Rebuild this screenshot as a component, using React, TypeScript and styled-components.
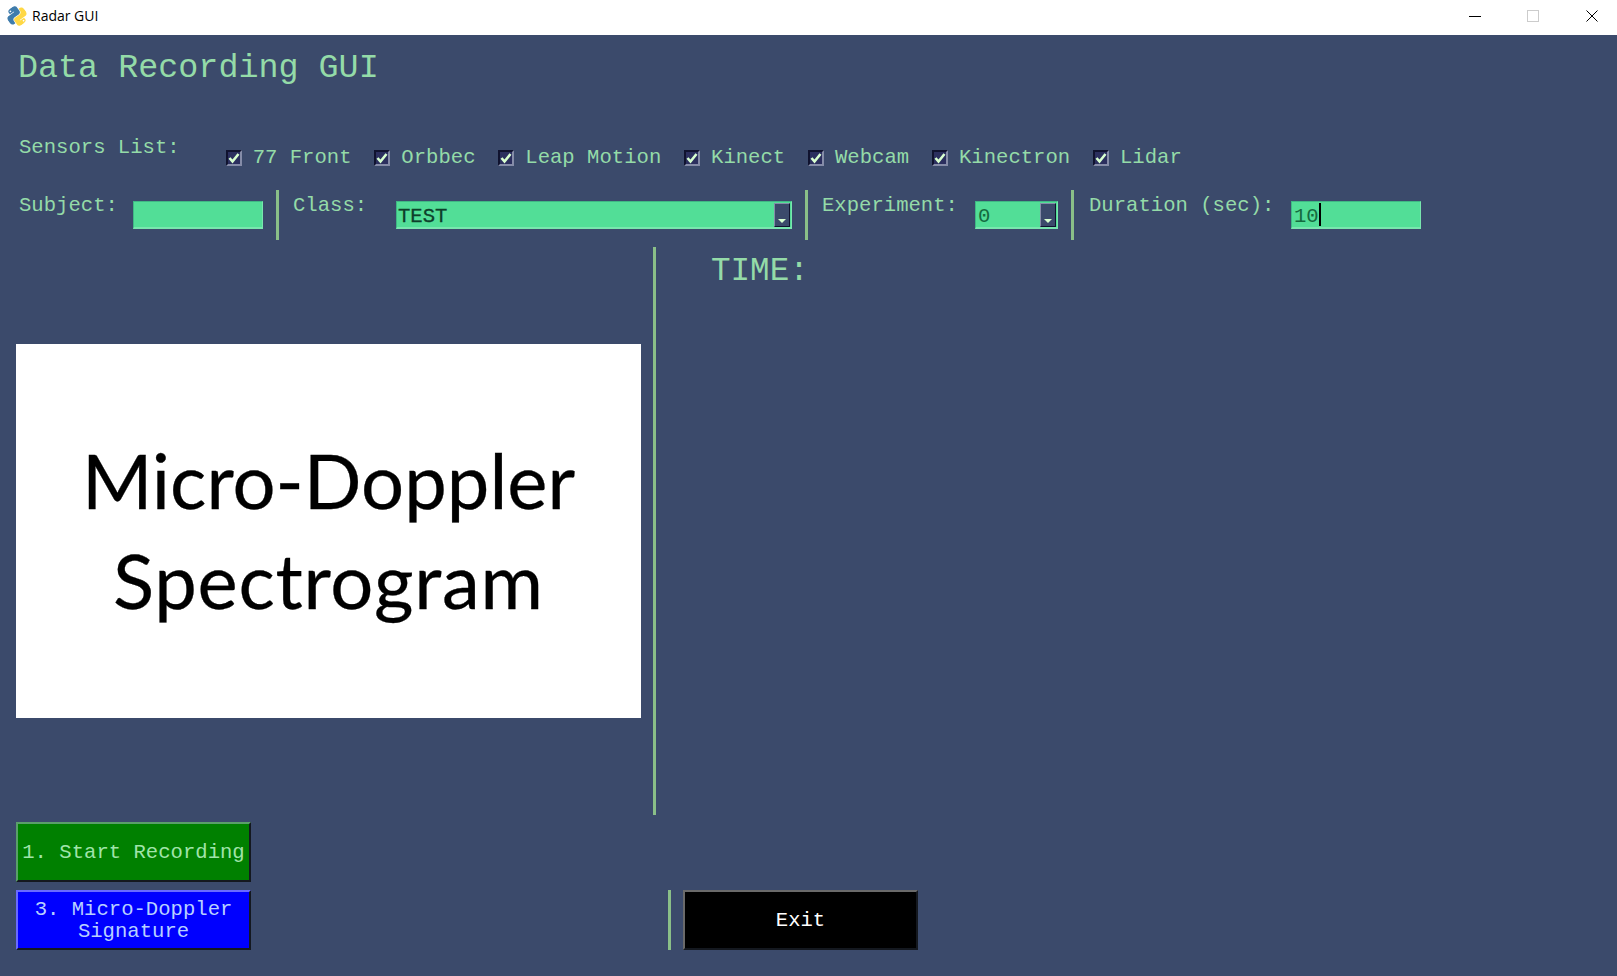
import React from "react";
import styled, { createGlobalStyle } from "styled-components";

const BG = "#3b4a6b";
const INK = "#94dba8";
const FIELD = "#52de97";
const RULE = "#8abf88";
const MONO = '"Liberation Mono", "Courier New", monospace';

const Global = createGlobalStyle`
  html, body { margin: 0; padding: 0; background: ${BG}; overflow: hidden; }
  * { box-sizing: border-box; }
`;

const Window = styled.div`
  width: 1617px;
  height: 976px;
  display: flex;
  flex-direction: column;
  background: ${BG};
  color: ${INK};
  font-family: ${MONO};
  overflow: hidden;
`;

const TitleBar = styled.header`
  height: 35px;
  flex: none;
  background: #fff;
  display: flex;
  align-items: center;
  padding: 0 19px 4px 7px;
`;

const TitleText = styled.span`
  font-family: "Open Sans", "Noto Sans", sans-serif;
  font-size: 14px;
  color: #000;
  margin-left: 5px;
  flex: 1;
`;

const WindowControls = styled.div`
  display: flex;
  gap: 46px;
  align-items: center;
`;

const CloseIcon = styled.svg`
  margin-left: 1px;
`;

const LogoIcon = styled.svg`
  transform: rotate(-35deg);
`;

const Heading = styled.h1`
  margin: 0;
  padding: 14px 0 0 18px;
  height: 102px;
  font-size: 33.4px;
  line-height: 38px;
  font-weight: 400;
`;

const SensorRow = styled.div`
  display: flex;
  height: 53px;
  padding-left: 19px;
`;

const Text = styled.span<{ $w?: number; $top?: number }>`
  flex: none;
  font-size: 20.6px;
  line-height: 24px;
  white-space: pre;
  width: ${(p) => (p.$w ? `${p.$w}px` : "auto")};
  margin-top: ${(p) => p.$top ?? 0}px;
`;

const SensorHeading = styled(Text)`
  margin-top: -1px;
`;

const SensorList = styled.div`
  display: flex;
  gap: 22.8px;
  margin-left: 46px;
  margin-top: 8px;
`;

const Sensor = styled.label`
  display: flex;
  align-items: center;
  gap: 11px;
  height: 24px;
  font-size: 20.6px;
  white-space: pre;
`;

const Box = styled.span`
  width: 16px;
  height: 16px;
  flex: none;
  margin-top: 1px;
  display: flex;
  align-items: center;
  justify-content: center;
  background: #2b2f5e;
  border-style: solid;
  border-width: 2px;
  border-color: #10132f #858ca8 #858ca8 #10132f;
`;

const FormRow = styled.div`
  display: flex;
  height: 50px;
  padding-left: 19px;
`;

const FormRule = styled.div<{ $l: number; $r: number }>`
  width: 3px;
  height: 50px;
  flex: none;
  background: ${RULE};
  margin: 0 ${(p) => p.$r}px 0 ${(p) => p.$l}px;
`;

const Field = styled.div<{ $w: number }>`
  width: ${(p) => p.$w}px;
  height: 28px;
  flex: none;
  margin-top: 11px;
  position: relative;
  display: flex;
  align-items: center;
  padding: 3px 0 0 2px;
  background: ${FIELD};
  border-style: solid;
  border-width: 1px 1px 2px 1px;
  border-color: #3fb884 #78e6ae #78e6ae #3fb884;
  color: #146b3f;
  font-size: 20.6px;
  white-space: pre;
`;

const StrongValue = styled.span`
  color: #0d3f2a;
  margin-left: -1px;
  -webkit-text-stroke: 0.3px #0d3f2a;
`;

const Caret = styled.span`
  width: 2px;
  height: 23px;
  margin-top: -3px;
  background: #000;
`;

const ComboButton = styled.span`
  position: absolute;
  right: 1px;
  top: 1px;
  bottom: 0;
  width: 16px;
  display: flex;
  align-items: flex-end;
  justify-content: center;
  padding-bottom: 3px;
  background: ${BG};
  border-style: solid;
  border-width: 1px;
  border-color: #858ca8 #10132f #10132f #858ca8;
`;

const Arrow = styled.span`
  width: 0;
  height: 0;
  border-left: 4px solid transparent;
  border-right: 4px solid transparent;
  border-top: 4px solid #d8ffd0;
`;

const Main = styled.main`
  display: flex;
  height: 568px;
  margin-top: 7px;
  flex: none;
`;

const LeftPane = styled.section`
  width: 653px;
  flex: none;
  padding: 97px 0 0 16px;
`;

const Plot = styled.div`
  width: 625px;
  height: 374px;
  background: #fff;
  color: #000;
  font-family: Lato, "Open Sans", sans-serif;
  font-size: 76px;
  line-height: 100px;
  text-align: center;
  padding-top: 86px;
  -webkit-text-stroke: 0.3px #000;
`;

const PlotLine = styled.span<{ $track?: number }>`
  display: block;
  letter-spacing: ${(p) => p.$track ?? 0}px;
`;

const MainRule = styled.div`
  width: 3px;
  flex: none;
  background: ${RULE};
`;

const Time = styled.h2`
  margin: 0 0 0 55px;
  padding-top: 6px;
  font-size: 32.6px;
  line-height: 38px;
  font-weight: 400;
`;

const Bottom = styled.footer`
  display: flex;
  margin-top: 7px;
  flex: none;
`;

const ButtonStack = styled.div`
  width: 668px;
  flex: none;
  padding-left: 16px;
  display: flex;
  flex-direction: column;
  gap: 8px;
`;

const ExitGroup = styled.div`
  display: flex;
  align-self: flex-end;
  gap: 12px;
`;

const ExitRule = styled.div`
  width: 3px;
  background: ${RULE};
`;

const Action = styled.button<{ $bg: string; $hi: string; $fg: string }>`
  width: 235px;
  height: 60px;
  padding: 2px 0 0;
  font-family: ${MONO};
  font-size: 20.6px;
  line-height: 22px;
  white-space: pre-line;
  color: ${(p) => p.$fg};
  background: ${(p) => p.$bg};
  border-style: solid;
  border-width: 2px;
  border-color: ${(p) => p.$hi} #14181f #14181f ${(p) => p.$hi};
`;

const Check = () => (
  <svg width="12" height="12" viewBox="0 0 12 12">
    <path d="M1.5 6 L4.5 9.5 L10.5 2" fill="none" stroke="#d8ffd0" strokeWidth="2.6" />
  </svg>
);

const PythonLogo = () => (
  <LogoIcon width="20" height="20" viewBox="0 0 110 110">
    <path
      fill="#3f7cac"
      d="M54.9 0C26.9 0 28.6 12.2 28.6 12.2l.03 12.6h26.7v3.8H18S0 26.5 0 54.8s15.7 27.3 15.7 27.3h9.4V69s-.5-15.7 15.5-15.7h26.6s15 .2 15-14.5V14.5S84 0 54.9 0zM40 8.5a4.8 4.8 0 1 1 0 9.6 4.8 4.8 0 0 1 0-9.6z"
    />
    <path
      fill="#ffd845"
      transform="rotate(180 55 55)"
      d="M54.9 0C26.9 0 28.6 12.2 28.6 12.2l.03 12.6h26.7v3.8H18S0 26.5 0 54.8s15.7 27.3 15.7 27.3h9.4V69s-.5-15.7 15.5-15.7h26.6s15 .2 15-14.5V14.5S84 0 54.9 0zM40 8.5a4.8 4.8 0 1 1 0 9.6 4.8 4.8 0 0 1 0-9.6z"
    />
  </LogoIcon>
);

const sensors = ["77 Front", "Orbbec", "Leap Motion", "Kinect", "Webcam", "Kinectron", "Lidar"];

export default function App() {
  return (
    <Window>
      <Global />
      <TitleBar>
        <PythonLogo />
        <TitleText>Radar GUI</TitleText>
        <WindowControls>
          <svg width="12" height="12" viewBox="0 0 12 12">
            <path d="M0 6.5H12" stroke="#000" strokeWidth="1" />
          </svg>
          <svg width="12" height="12" viewBox="0 0 12 12">
            <rect x="0.5" y="0.5" width="11" height="11" fill="none" stroke="#ccc" />
          </svg>
          <CloseIcon width="12" height="12" viewBox="0 0 12 12">
            <path d="M0.5 0.5L11.5 11.5M11.5 0.5L0.5 11.5" stroke="#000" strokeWidth="1" />
          </CloseIcon>
        </WindowControls>
      </TitleBar>

      <Heading>Data Recording GUI</Heading>

      <SensorRow>
        <SensorHeading>Sensors List:</SensorHeading>
        <SensorList>
          {sensors.map((s) => (
            <Sensor key={s}>
              <Box>
                <Check />
              </Box>
              {s}
            </Sensor>
          ))}
        </SensorList>
      </SensorRow>

      <FormRow>
        <Text $w={114} $top={4}>Subject:</Text>
        <Field $w={130} />
        <FormRule $l={13} $r={14} />
        <Text $w={103} $top={4}>Class:</Text>
        <Field $w={396}>
          <StrongValue>TEST</StrongValue>
          <ComboButton>
            <Arrow />
          </ComboButton>
        </Field>
        <FormRule $l={13} $r={14} />
        <Text $w={153} $top={4}>Experiment:</Text>
        <Field $w={83}>
          0
          <ComboButton>
            <Arrow />
          </ComboButton>
        </Field>
        <FormRule $l={13} $r={15} />
        <Text $w={202} $top={4}>Duration (sec):</Text>
        <Field $w={130}>
          10
          <Caret />
        </Field>
      </FormRow>

      <Main>
        <LeftPane>
          <Plot>
            <PlotLine>Micro-Doppler</PlotLine>
            <PlotLine $track={0.75}>Spectrogram</PlotLine>
          </Plot>
        </LeftPane>
        <MainRule />
        <Time>TIME:</Time>
      </Main>

      <Bottom>
        <ButtonStack>
          <Action $bg="#008000" $hi="#5a9f6a" $fg="#a0e4aa">1. Start Recording</Action>
          <Action $bg="#0000ff" $hi="#6a6aff" $fg="#b8d0ff">{"3. Micro-Doppler\nSignature"}</Action>
        </ButtonStack>
        <ExitGroup>
          <ExitRule />
          <Action $bg="#000" $hi="#6a6a6a" $fg="#fff">Exit</Action>
        </ExitGroup>
      </Bottom>
    </Window>
  );
}
